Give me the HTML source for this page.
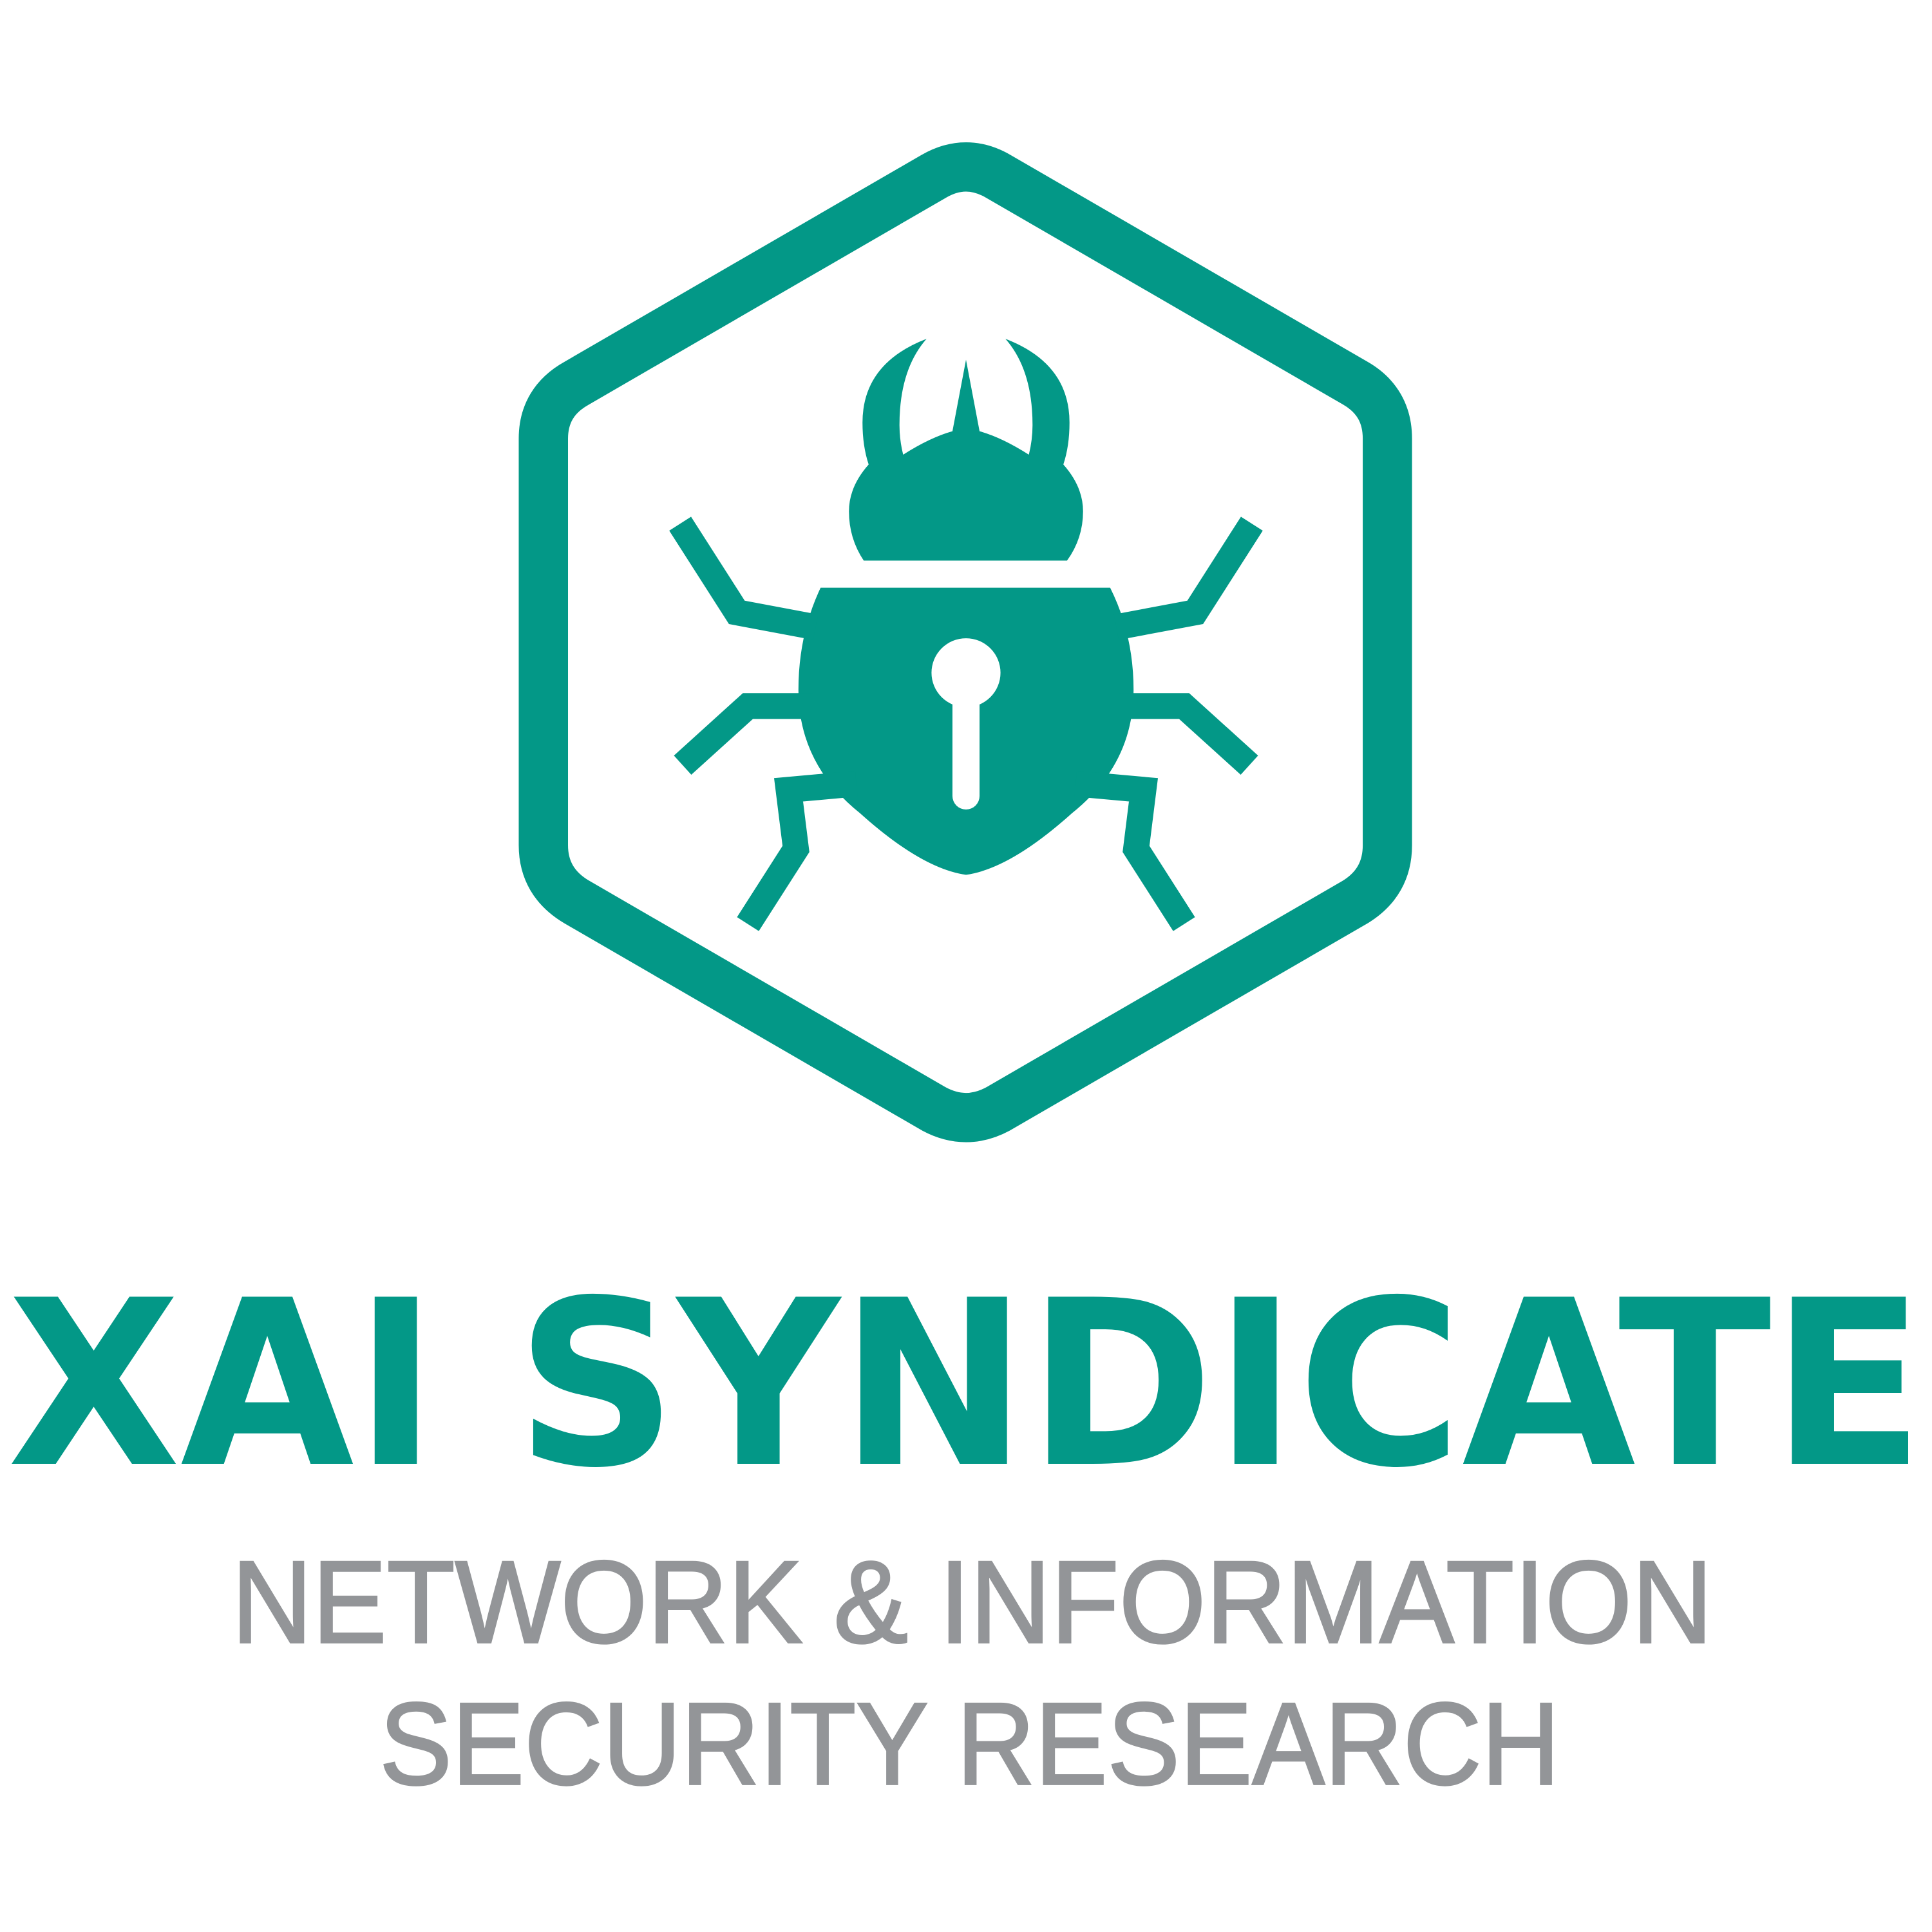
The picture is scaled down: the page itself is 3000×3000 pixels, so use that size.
<!DOCTYPE html>
<html>
<head>
<meta charset="utf-8">
<style>
html,body{margin:0;padding:0;background:#fff;}
svg{display:block;}
</style>
</head>
<body>
<svg width="3000" height="3000" viewBox="0 0 1568 1568" xmlns="http://www.w3.org/2000/svg">
  <rect width="1568" height="1568" fill="#fff"/>
  <path d="M758 143 Q784 128 810 143 L1100 311 Q1126 326 1126 356 L1126 686 Q1126 716 1100 732 L810 900 Q784 914 758 900 L468 732 Q441 716 441 686 L441 356 Q441 326 468 311 Z" fill="none" stroke="#039887" stroke-width="40" stroke-linejoin="round"/>
  <path d="M701 455 Q689 437 689 415 Q689 395 705 377 Q700 362 700 343 Q700 295 752 275 Q730 300 730 345 Q730 357 733 369 Q755 355 773 350 L784 292 L795 350 Q813 355 835 369 Q838 357 838 345 Q838 300 816 275 Q868 295 868 343 Q868 362 863 377 Q879 395 879 415 Q879 437 866 455 Z" fill="#039887"/>
  <path d="M666 477 L901 477 Q920 515 920 560 Q920 620 870 660 Q820 705 784 710 Q748 705 698 660 Q648 620 648 560 Q648 515 666 477 Z" fill="#039887"/>
  <circle cx="784" cy="546" r="28" fill="#fff"/>
  <rect x="773" y="548" width="22" height="109" rx="11" fill="#fff"/>
  <g fill="none" stroke="#039887" stroke-width="21" stroke-linejoin="miter">
    <polyline points="552,425 598,497 662,509"/>
    <polyline points="1016,425 970,497 906,509"/>
    <polyline points="554,621 607,573 660,573"/>
    <polyline points="1014,621 961,573 908,573"/>
    <polyline points="607,750 646,689 640,641 695,636"/>
    <polyline points="961,750 922,689 928,641 873,636"/>
  </g>
  <text x="6" y="1188" font-family="DejaVu Sans, Liberation Sans, sans-serif" font-weight="bold" font-size="186" fill="#039887" textLength="1556" lengthAdjust="spacingAndGlyphs">XAI SYNDICATE</text>
  <text x="188" y="1333" font-family="Liberation Sans, sans-serif" font-size="95" fill="#939598" stroke="#939598" stroke-width="1.6" textLength="1202" lengthAdjust="spacingAndGlyphs">NETWORK &amp; INFORMATION</text>
  <text x="308" y="1448" font-family="Liberation Sans, sans-serif" font-size="95" fill="#939598" stroke="#939598" stroke-width="1.6" textLength="958" lengthAdjust="spacingAndGlyphs">SECURITY RESEARCH</text>
</svg>
</body>
</html>
